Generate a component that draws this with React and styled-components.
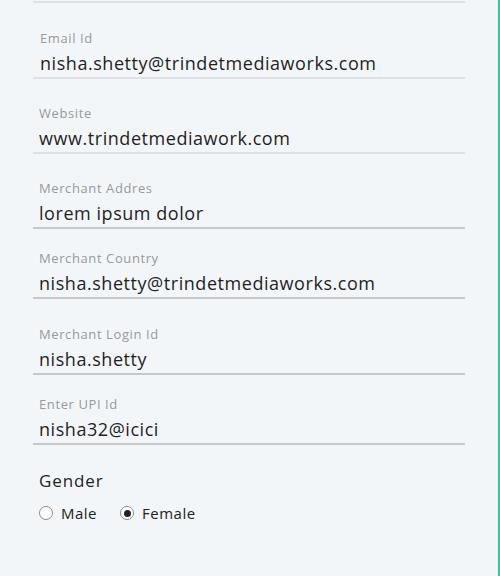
import React from "react";
import styled, { createGlobalStyle } from "styled-components";

const Global = createGlobalStyle`
  html, body { margin: 0; padding: 0; background: #f3f6f9; }
  body { font-family: "Open Sans", "Noto Sans", sans-serif; }
`;

const Page = styled.div`
  box-sizing: border-box;
  width: 500px;
  height: 576px;
  background: #f3f6f9;
  border-right: 2px solid #1cd49b;
  padding-left: 33px;
  overflow: hidden;
`;

const Form = styled.div`
  width: 432px;
  display: flex;
  flex-direction: column;
`;

const TopRule = styled.div`
  height: 2px;
  margin-top: 1px;
  background: #dde1e5;
`;

const Field = styled.div`
  display: flex;
  flex-direction: column;
  padding: ${(p) => p.$space}px 0 3px ${(p) => p.$inset || 6}px;
  border-bottom: ${(p) => (p.$dark ? "2px solid #c6c8ca" : "2px solid #dde1e5")};
`;

const Label = styled.div`
  font-size: 13px;
  line-height: 16px;
  color: #999999;
  letter-spacing: 0.6px;
`;

const Value = styled.div`
  margin-top: 6px;
  font-size: 18px;
  line-height: 22px;
  color: #1f1f1f;
  letter-spacing: 0.55px;
`;

const GenderBlock = styled.div`
  padding: 25px 0 0 6px;
  display: flex;
  flex-direction: column;
  gap: 11px;
`;

const GenderTitle = styled.div`
  font-size: 17px;
  line-height: 22px;
  color: #222;
  letter-spacing: 0.9px;
`;

const RadioRow = styled.div`
  display: flex;
  align-items: center;
  gap: 23px;
`;

const Option = styled.label`
  display: flex;
  align-items: center;
  gap: 8px;
  font-size: 15px;
  line-height: 20px;
  color: #222;
  letter-spacing: 0.5px;
`;

const Circle = styled.span`
  box-sizing: border-box;
  width: 14px;
  height: 14px;
  border-radius: 50%;
  border: 1px solid #8a8a8a;
  background: #fff;
  display: flex;
  align-items: center;
  justify-content: center;
  &::after {
    content: "";
    width: 7px;
    height: 7px;
    border-radius: 50%;
    background: ${(p) => (p.$checked ? "#222" : "transparent")};
  }
`;

const fields = [
  { label: "Email Id", value: "nisha.shetty@trindetmediaworks.com", inset: 7, space: 27 },
  { label: "Website", value: "www.trindetmediawork.com", space: 26 },
  { label: "Merchant Addres", value: "lorem ipsum dolor", dark: true, space: 26 },
  { label: "Merchant Country", value: "nisha.shetty@trindetmediaworks.com", dark: true, space: 21 },
  { label: "Merchant Login Id", value: "nisha.shetty", dark: true, space: 27 },
  { label: "Enter UPI Id", value: "nisha32@icici", dark: true, space: 21 },
];

export default function App() {
  return (
    <>
      <Global />
      <Page>
        <Form>
          <TopRule />
          {fields.map((f) => (
            <Field key={f.label} $dark={f.dark} $space={f.space} $inset={f.inset}>
              <Label>{f.label}</Label>
              <Value>{f.value}</Value>
            </Field>
          ))}
          <GenderBlock>
            <GenderTitle>Gender</GenderTitle>
            <RadioRow>
              <Option>
                <Circle />
                Male
              </Option>
              <Option>
                <Circle $checked />
                Female
              </Option>
            </RadioRow>
          </GenderBlock>
        </Form>
      </Page>
    </>
  );
}
